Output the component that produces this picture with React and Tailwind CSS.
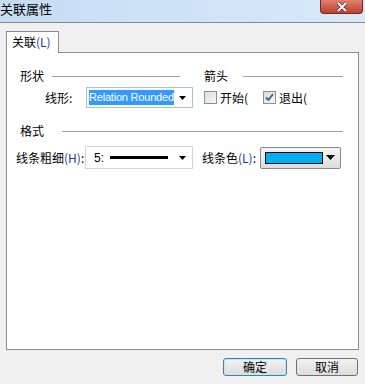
import React from "react";

const font = { fontFamily: '"Noto Sans CJK SC", "Liberation Sans", sans-serif' };

function Arrow() {
  return (
    <svg width="7" height="4" viewBox="0 0 7 4">
      <path d="M0 0 H7 L3.5 4 Z" fill="#000" />
    </svg>
  );
}

function Check({ checked }) {
  return (
    <div className="w-[13px] h-[13px] border border-[#8f8f8f] bg-gradient-to-br from-[#dcdcdc] to-[#f6f6f6] flex items-center justify-center">
      {checked && (
        <svg width="9" height="9" viewBox="0 0 9 9">
          <path d="M1 4.5 L3.5 7 L8 1" stroke="#3c5d9c" strokeWidth="1.8" fill="none" />
        </svg>
      )}
    </div>
  );
}

export default function App() {
  return (
    <div className="w-[365px] h-[384px] bg-[#f0f0f0] flex flex-col text-[12px] text-black overflow-hidden" style={font}>
      {/* Title bar */}
      <div className="h-[23px] flex justify-between items-start bg-gradient-to-r from-[#c6dcf3] via-[#cfe3f8] to-[#d8e8f8] border-b border-[#848b95]">
        <span className="leading-[18px] text-[13px]">关联属性</span>
        <div className="mr-[2px] w-[43px] h-[14px] rounded-b-[4px] border border-t-0 border-[#6b2a22] bg-gradient-to-b from-[#d98170] to-[#c23d2a] flex items-center justify-center">
          <svg width="12" height="10" viewBox="0 0 12 10">
            <path d="M2 1 L10 9 M10 1 L2 9" stroke="#3b3b3b" strokeWidth="3.2" />
            <path d="M2 1 L10 9 M10 1 L2 9" stroke="#fff" strokeWidth="1.8" />
          </svg>
        </div>
      </div>

      {/* Tabs */}
      <div className="px-[6px] pt-[8px]">
        <div className="relative z-10 w-[53px] h-[22px] bg-white border border-b-0 border-[#898c95] px-[5px] leading-[20px] text-[12px]">
          关联<span className="text-[#1b3a8a]">(L)</span>
        </div>
        <div className="-mt-px w-[353px] h-[298px] bg-white border border-[#898c95] px-[9px] pt-[16px]">
          {/* row 1 */}
          <div className="flex items-center h-[14px] pl-[4px]">
            <div className="w-[160px] flex items-center">
              <span>形状</span>
              <div className="ml-[8px] flex-1 h-px bg-[#a0a0a0]" />
            </div>
            <div className="ml-[24px] w-[139px] flex items-center">
              <span>箭头</span>
              <div className="ml-[15px] flex-1 h-px bg-[#a0a0a0]" />
            </div>
          </div>

          {/* row 2 */}
          <div className="mt-[4px] flex items-center h-[21px] pl-[29px]">
            <span className="w-[41px]">线形:</span>
            <div className="w-[107px] h-[21px] border border-[#a8c2dc] flex items-center pl-[2px] pr-[6px]">
              <span className="h-[15px] bg-[#3399ff] text-white leading-[15px] text-[11px] tracking-[-0.2px] whitespace-nowrap" style={{ fontFamily: '"Liberation Sans", sans-serif' }}>
                Relation Rounded
              </span>
              <div className="ml-auto">
                <Arrow />
              </div>
            </div>
            <div className="ml-[11px] flex items-center">
              <Check />
              <span className="ml-[3px] w-[28px] overflow-hidden whitespace-nowrap">开始(</span>
            </div>
            <div className="ml-[15px] flex items-center">
              <Check checked />
              <span className="ml-[3px] w-[28px] overflow-hidden whitespace-nowrap">退出(</span>
            </div>
          </div>

          {/* row 3 */}
          <div className="mt-[16px] flex items-center h-[14px] pl-[4px]">
            <span>格式</span>
            <div className="ml-[18px] w-[281px] h-px bg-[#a0a0a0]" />
          </div>

          {/* row 4 */}
          <div className="mt-[8px] flex items-center h-[23px]">
            <span className="w-[69px] whitespace-nowrap">
              线条粗细<span className="text-[#1b3a8a]">(H)</span>:
            </span>
            <div className="w-[108px] h-[23px] border border-[#d4d4d4] flex items-center pl-[8px] pr-[6px]">
              <span style={{ fontFamily: '"Liberation Sans", sans-serif' }}>5:</span>
              <div className="ml-[6px] w-[58px] h-[3px] bg-black" />
              <div className="ml-auto">
                <Arrow />
              </div>
            </div>
            <span className="ml-[9px] w-[58px] whitespace-nowrap">
              线条色<span className="text-[#1b3a8a]">(L)</span>:
            </span>
            <div className="w-[81px] h-[22px] rounded-[2px] border border-[#8a8a8a] bg-gradient-to-b from-[#f6f6f6] to-[#dcdcdc] flex items-center pl-[4px] pr-[5px]">
              <div className="w-[58px] h-[12px] bg-[#00b0f0] border border-black" />
              <div className="ml-auto">
                <svg width="9" height="5" viewBox="0 0 9 5">
                  <path d="M0 0 H9 L4.5 5 Z" fill="#000" />
                </svg>
              </div>
            </div>
          </div>
        </div>
      </div>

      {/* Buttons */}
      <div className="mt-[8px] flex justify-end gap-[9px] pr-[7px]">
        <button className="w-[64px] h-[18px] rounded-[3px] border border-[#3c7fb1] bg-gradient-to-b from-[#f2f2f2] to-[#dcdcdc] shadow-[inset_0_0_0_1px_#c4e5f6] text-[12px] leading-[16px]">
          确定
        </button>
        <button className="w-[62px] h-[18px] rounded-[3px] border border-[#707070] bg-gradient-to-b from-[#f2f2f2] to-[#dcdcdc] text-[12px] leading-[16px]">
          取消
        </button>
      </div>
    </div>
  );
}
